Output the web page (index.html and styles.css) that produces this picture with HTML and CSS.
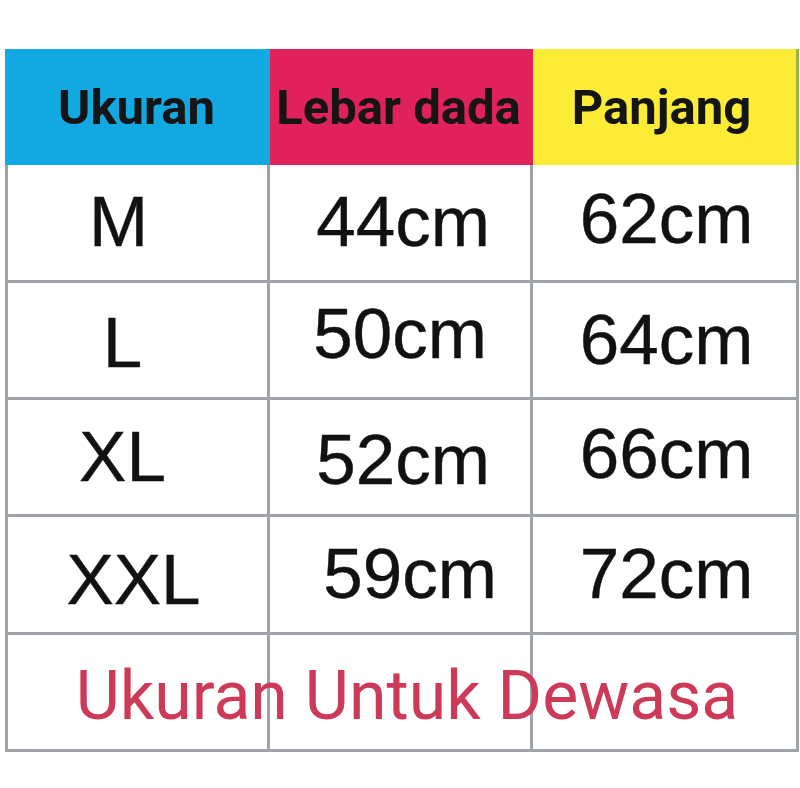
FILE: index.html
```html
<!DOCTYPE html>
<html lang="id">
<head>
<meta charset="utf-8">
<title>Ukuran</title>
<link rel="stylesheet" href="styles.css">
</head>
<body>
<div class="sheet">
  <div class="head blue">Ukuran</div>
  <div class="head pink">Lebar dada</div>
  <div class="head yellow">Panjang</div>

  <div class="cell c1 left">M</div>
  <div class="cell c2">44cm</div>
  <div class="cell c3 up">62cm</div>

  <div class="cell c1 down">L</div>
  <div class="cell c2 up2 left">50cm</div>
  <div class="cell c3">64cm</div>

  <div class="cell c1">XL</div>
  <div class="cell c2 down">52cm</div>
  <div class="cell c3 up">66cm</div>

  <div class="cell c1 down2 right">XXL</div>
  <div class="cell c2 right">59cm</div>
  <div class="cell c3">72cm</div>

  <div class="cell c1 foot-cell f1"></div>
  <div class="cell c2 foot-cell f2"></div>
  <div class="cell c3 foot-cell f3"></div>
  <div class="foot-text">Ukuran Untuk Dewasa</div>
</div>
</body>
</html>
```
FILE: styles.css
```css
html, body {
  margin: 0;
  padding: 0;
  background: #ffffff;
}

body {
  width: 800px;
  height: 788px;
  overflow: hidden;
}

.sheet {
  margin: 49px 0 0 5px;
  width: 794px;
  display: grid;
  grid-template-columns: 265px 263px 266px;
  grid-template-rows: 116px 118px 117px 117px 118px 117px;
}

.head {
  display: flex;
  align-items: center;
  justify-content: center;
  font-family: Roboto, "Liberation Sans", sans-serif;
  font-weight: 700;
  font-size: 49px;
  color: #151515;
}

.blue {
  background: #12a9e3;
  padding-right: 2px;
}

.pink {
  background: #e0215b;
  padding-right: 6px;
}

.yellow {
  background: #fdec36;
  border-right: 3px solid #98b04a;
  padding-right: 6px;
}

.cell {
  box-sizing: border-box;
  display: flex;
  align-items: center;
  justify-content: center;
  border-right: 3px solid #9fa3a7;
  border-bottom: 3px solid #9fa3a7;
  font-family: "Liberation Sans", Arial, sans-serif;
  font-size: 71px;
  color: #111111;
  -webkit-text-stroke: 0.4px #111111;
  padding-bottom: 2px;
}

.c1 {
  border-left: 3px solid #9fa3a7;
  padding-right: 30px;
}

.c2 {
  padding-left: 6px;
}

.c3 {
  padding-left: 4px;
}

.c1.left {
  padding-right: 38px;
}

.c1.right {
  padding-right: 8px;
}

.c2.left {
  padding-left: 0;
}

.c2.right {
  padding-left: 20px;
}

.up {
  padding-bottom: 8px;
}

.up2 {
  padding-bottom: 14px;
}

.down {
  padding-top: 6px;
}

.down2 {
  padding-top: 12px;
}

.foot-cell {
  grid-row: 6;
}

.f1 {
  grid-column: 1;
}

.f2 {
  grid-column: 2;
}

.f3 {
  grid-column: 3;
}

.foot-text {
  grid-row: 6;
  grid-column: 1 / -1;
  display: flex;
  align-items: center;
  justify-content: center;
  padding-left: 10px;
  padding-top: 4px;
  font-family: Roboto, "Liberation Sans", sans-serif;
  font-size: 68px;
  color: #cc3a57;
  z-index: 1;
}
```
